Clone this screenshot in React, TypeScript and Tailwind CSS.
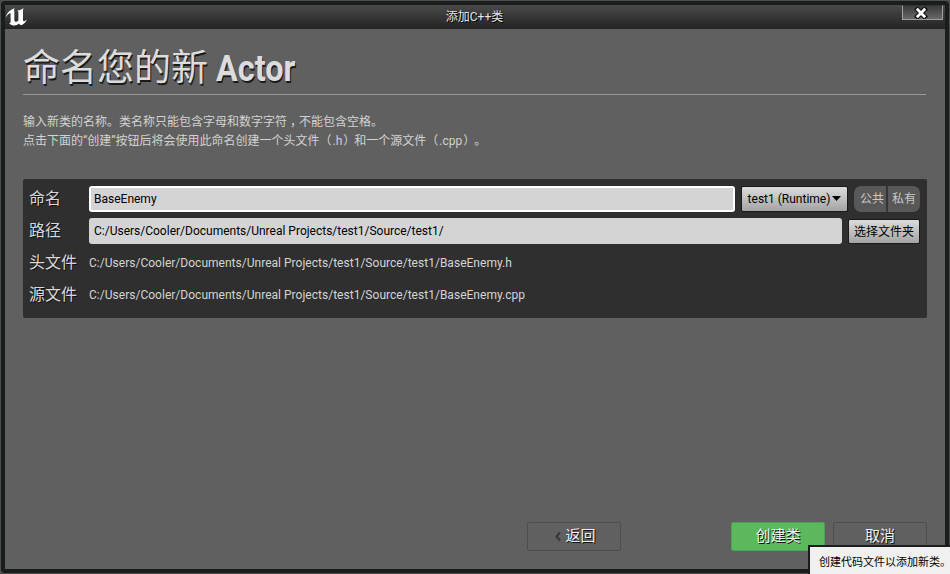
import type { ReactNode } from 'react';

const path = 'C:/Users/Cooler/Documents/Unreal Projects/test1/Source/test1/';

function Label({ children }: { children: ReactNode }) {
  return (
    <div className="w-[60px] shrink-0 text-[16px] leading-[26px] tracking-normal text-[#d8d8d8] [text-shadow:1px_1px_0_#111]">
      {children}
    </div>
  );
}

function FooterButton({ children, green = false }: { children: ReactNode; green?: boolean }) {
  return (
    <button
      className={`flex h-[29px] w-[94px] items-center justify-center rounded-[2px] border pb-px text-[15px] leading-none text-[#f0f0f0] [text-shadow:1px_1px_0_#111] ${
        green ? 'border-[#4da34f] bg-[#5cb85c]' : 'border-[#4e4e4e] bg-[#606060]'
      }`}
    >
      {children}
    </button>
  );
}

function UnrealLogo() {
  return (
    <svg width="24" height="20" viewBox="0 0 24 20" fill="#fff">
      <path d="M.7 10.6C1.8 6.2 4.8 2.6 9.8 1.2 8.7 2.3 9.2 3.3 9.3 4.6v8.1c0 1.6 1 2.3 2.3 2.1l1.8-1.3V5.4c0-1.2-.5-1.5-1.2-1.7 2.5-.2 4.7-1.2 6.6-2.6-.9 1.4-.8 2.2-.8 3.6v8.1c0 1.1.6 1.7 1.4 1.5.8-.3 1.5-1 2.4-2-1 3.2-2.9 5-5.6 6-.9-.4-1.6-1-2.2-1.900-1.300 1.200-2.900 2.100-5 2-2.400.1-3.900-.8-4.800-2.400.9.2 1.400-.2 1.400-1.300V7c0-.8-.3-1-.9-.8C3 6.900 1.900 8.500.700 10.600Z" />
    </svg>
  );
}

export default function App() {
  return (
    <div className="relative h-[574px] w-[950px] overflow-hidden bg-[#4c4f50] p-px font-['Roboto','Noto_Sans_CJK_SC',sans-serif]">
      <div className="flex h-[572px] flex-col rounded-[4px] bg-[#1b1c1c] p-1">
        <header className="relative flex h-6 shrink-0 items-start justify-center bg-linear-to-b from-[#4a4a4a] to-[#242424]">
          <div className="absolute top-[2px] left-0">
            <UnrealLogo />
          </div>
          <h1 className="pt-[3px] pr-px text-[12px] leading-[18px] text-[#e4e4e4] [text-shadow:1px_1px_0_#000]">添加C++类</h1>
          <button className="absolute top-0 right-[2px] flex h-[15px] w-[41px] items-center justify-center border border-[#a0a0a0] border-t-[#333] bg-linear-to-b from-[#3b3b3b] to-[#696969] pr-[3px]">
            <svg width="14" height="12" viewBox="0 0 14 12">
              <path d="M3.500 2.500 10.500 9.500M10.500 2.500 3.500 9.500" stroke="#111" strokeWidth="5" strokeLinecap="square" />
              <path d="M2.800 1.800 11.200 10.200M11.200 1.800 2.800 10.200" stroke="#fff" strokeWidth="2.800" />
            </svg>
          </button>
        </header>
        <main className="flex min-h-0 flex-1 flex-col bg-[#606060] px-[18px]">
          <h2 className="flex h-[66px] w-[903px] items-center border-b border-[#999] pt-[15px] text-[37px] leading-[50px] text-[#dcdcdc] [text-shadow:1px_2px_0_#1a1a1a]">
            <span className="w-[193px] font-normal">命名您的新</span>
            <span className="origin-left scale-x-[0.9] text-[36px] font-bold">Actor</span>
          </h2>
          <p className="mt-[18px] text-[12px] leading-[19px] whitespace-nowrap text-[#d2d2d2] [text-spacing-trim:space-all]">
            输入新类的名称。类名称只能包含字母和数字字符<span className="relative left-[3px]">，</span>不能包含空格。
            <br />
            点击下面的“创建”按钮后将会使用此命名创建一个头文件（<span className="ml-px">.h</span>
            <span className="relative left-px">）</span>和一个源文件（<span className="ml-px">.cpp</span>
            <span className="relative left-px">）</span>。
          </p>
          <section className="mt-[28px] flex h-[139px] w-[904px] flex-col gap-[6px] rounded-[2px] bg-[#2f2f2f] px-[6px] pt-[7px] text-[12px]">
            <div className="flex h-[26px]">
              <Label>命名</Label>
              <div className="w-[646px] rounded-[3px] border-2 border-white bg-[#d4d4d4] pl-[3px] leading-[22px] text-black">
                BaseEnemy
              </div>
              <button className="ml-[6px] flex w-[107px] items-center justify-center gap-[2px] rounded-[2px] border border-[#191919] bg-linear-to-b from-[#dcdcdc] to-[#a4a4a4] pb-px text-black">
                <span>test1 (Runtime)</span>
                <svg width="9" height="5" viewBox="0 0 9 5">
                  <path d="M0 0h9L4.500 5Z" />
                </svg>
              </button>
              <div className="ml-[6px] flex w-[66px] overflow-hidden rounded-[7px] bg-[#585858] leading-[26px] text-[#c8c8c8]">
                <span className="w-[34px] border-r-2 border-[#353535] pl-[6px] whitespace-nowrap">公共</span>
                <span className="pl-[4px]">私有</span>
              </div>
            </div>
            <div className="flex h-[26px]">
              <Label>路径</Label>
              <div className="w-[753px] rounded-[3px] bg-[#d4d4d4] pl-[5px] leading-[26px] text-black">{path}</div>
              <button className="mt-px ml-[6px] flex h-[25px] w-[72px] items-center justify-center rounded-[2px] border border-[#191919] bg-linear-to-b from-[#dcdcdc] to-[#a4a4a4] whitespace-nowrap text-black">
                选择文件夹
              </button>
            </div>
            <div className="flex h-[26px] leading-[26px] tracking-[0.02px] text-[#d4d4d4]">
              <Label>头文件</Label>
              <span>{path}BaseEnemy.h</span>
            </div>
            <div className="flex h-[26px] leading-[26px] tracking-[0.02px] text-[#d4d4d4]">
              <Label>源文件</Label>
              <span>{path}BaseEnemy.cpp</span>
            </div>
          </section>
          <footer className="mt-auto mb-[18px] flex w-[904px] justify-end">
            <FooterButton>
              <svg className="mr-[4px] ml-[3px]" width="6" height="9" viewBox="0 0 6 9" fill="none">
                <path d="M5 .5 1.500 4.500 5 8.500" stroke="#363636" strokeWidth="2" />
              </svg>
              返回
            </FooterButton>
            <div className="ml-[110px] flex gap-[8px]">
              <FooterButton green>创建类</FooterButton>
              <FooterButton>取消</FooterButton>
            </div>
          </footer>
        </main>
      </div>
      <div className="absolute top-[545px] left-[808px] h-[40px] w-[150px] border-2 border-[#1c1c1c] bg-[#f0f0f0] pl-[9px] text-[11px] leading-[31px] whitespace-nowrap text-black">
        创建代码文件以添加新类。
      </div>
    </div>
  );
}
